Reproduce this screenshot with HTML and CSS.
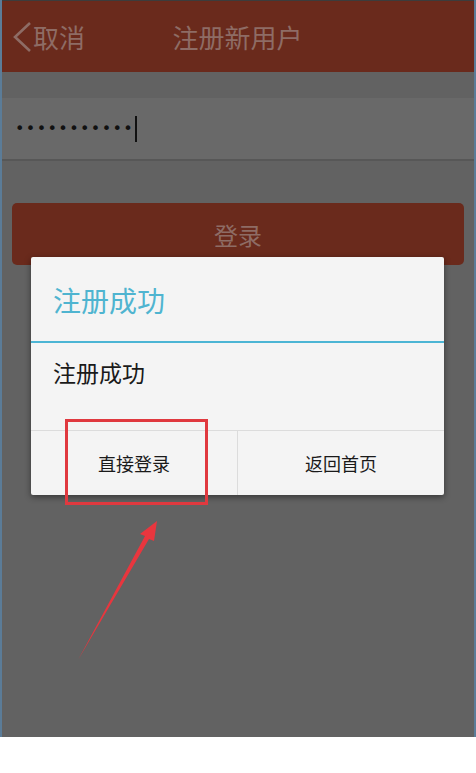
FILE: index.html
```html
<!DOCTYPE html>
<html lang="zh-CN">
<head>
  <meta charset="UTF-8">
  <meta name="viewport" content="width=device-width, initial-scale=1.0">
  <title>注册新用户</title>
  <link rel="stylesheet" href="styles.css">
</head>
<body>

  <div class="screen">
    <!-- Title bar -->
    <div class="topbar">
      <a href="#" class="back">
        <svg width="20" height="32" viewBox="0 0 20 32"><polyline points="18,2 3,16 18,30" fill="none" stroke="#8e6c65" stroke-width="2.6"/></svg>
        <span>取消</span>
      </a>
      <div class="title">注册新用户</div>
    </div>

    <div class="form">
      <div class="pwd-field">
        <span class="dots">•••••••••••</span><span class="caret"></span>
      </div>
      <button class="login-btn">登录</button>
    </div>

    <!-- Result dialog -->
    <div class="dialog">
      <div class="dialog-title">注册成功</div>
      <div class="dialog-msg">注册成功</div>
      <div class="dialog-actions">
        <button>直接登录</button>
        <button>返回首页</button>
      </div>
    </div>

    <!-- Hint marks -->
    <svg class="marks" width="476" height="737" viewBox="0 0 476 737">
      <rect x="66.5" y="420.5" width="140" height="83" fill="none" stroke="#e0393f" stroke-width="3"/>
      <polygon points="78,660 145,536 140,534 157,521 154,541 149,539" fill="#e8363e"/>
    </svg>
  </div>

</body>
</html>
```

FILE: styles.css
```css
body {
  margin: 0;
  background: #fff;
  font-family: "Noto Sans CJK SC", "Noto Sans", sans-serif;
}

.screen {
  position: relative;
  width: 476px;
  height: 737px;
  box-sizing: border-box;
  background: #626262;
  border-left: 2px solid #5b7c98;
  border-right: 2px solid #5b7c98;
  overflow: hidden;
}

/* top bar */
.topbar {
  height: 71px;
  border-top: 1px solid #3c3c3c;
  background: #6a2a1c;
  display: flex;
  align-items: center;
  position: relative;
  color: #8e6c65;
  font-size: 26px;
}

.back {
  display: flex;
  align-items: center;
  gap: 1px;
  padding-left: 10px;
  color: inherit;
  text-decoration: none;
}

.back svg {
  display: block;
}

.title {
  flex: 1;
  text-align: center;
  margin-right: 84px;
}

/* form */
.form {
  padding-top: 26px;
}

.pwd-field {
  height: 61px;
  background: #696969;
  border-bottom: 2px solid #575757;
  display: flex;
  align-items: center;
  padding-left: 13px;
}

.dots {
  color: #111;
  font-family: "DejaVu Sans", sans-serif;
  font-size: 16px;
  letter-spacing: 1.4px;
}

.caret {
  width: 1.5px;
  height: 26px;
  background: #111;
  margin-left: 1px;
}

.login-btn {
  display: block;
  margin: 42px 10px 0;
  width: calc(100% - 20px);
  height: 62px;
  border: none;
  border-radius: 5px;
  background: #6a2a1c;
  color: #8e6c65;
  font-family: inherit;
  font-size: 24px;
}

/* dialog */
.dialog {
  position: absolute;
  left: 29px;
  top: 257px;
  width: 413px;
  height: 238px;
  background: #f4f4f4;
  border-radius: 2px;
  box-shadow: 0 2px 6px rgba(0, 0, 0, 0.45);
  display: flex;
  flex-direction: column;
}

.dialog-title {
  height: 86px;
  box-sizing: border-box;
  padding: 22px 0 0 22px;
  font-size: 28px;
  line-height: 42px;
  color: #4fb4d0;
  border-bottom: 2px solid #4cb5d4;
}

.dialog-msg {
  flex: 1;
  padding: 12px 0 0 22px;
  font-size: 23px;
  line-height: 34px;
  color: #1a1a1a;
}

.dialog-actions {
  height: 64px;
  display: flex;
  border-top: 1px solid #dcdcdc;
}

.dialog-actions button {
  flex: 1;
  border: none;
  background: none;
  font-family: inherit;
  font-size: 18px;
  color: #1a1a1a;
}

.dialog-actions button + button {
  border-left: 1px solid #dcdcdc;
}

.marks {
  position: absolute;
  left: -2px;
  top: 0;
  pointer-events: none;
}
```
